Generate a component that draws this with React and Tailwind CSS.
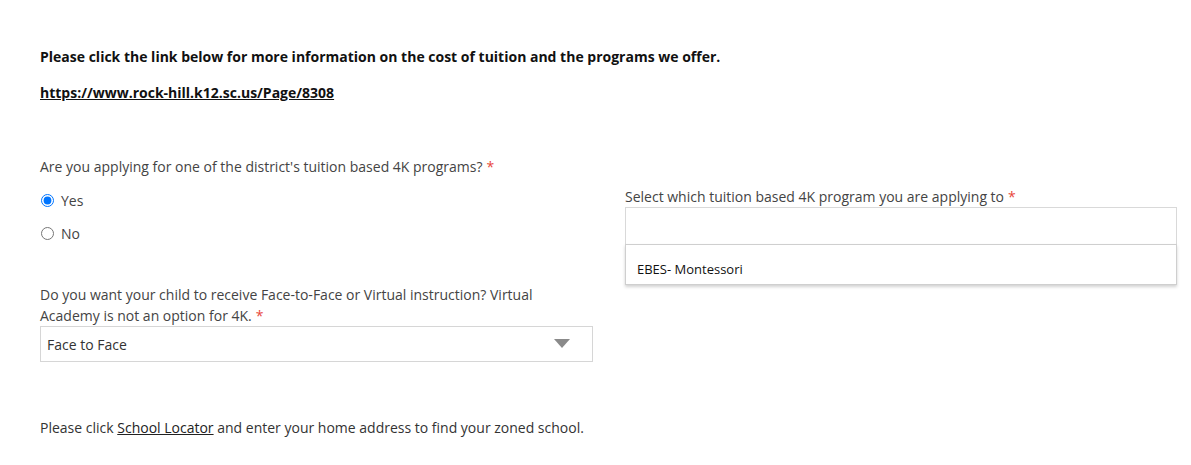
import React, { useState } from 'react';

const Req = () => <span className="ml-1 text-[#e8473b]">*</span>;

const RadioRow = ({ label, checked, onChange }) => (
  <label className="flex items-center h-5 text-[14px] text-[#444] cursor-pointer">
    <input
      type="radio"
      name="tuition"
      checked={checked}
      onChange={onChange}
      className="w-[13px] h-[13px] m-0 ml-[1px] accent-[#0075ff]"
    />
    <span className="ml-[7px]">{label}</span>
  </label>
);

export default function App() {
  const [tuition, setTuition] = useState('Yes');

  return (
    <div className="bg-white min-h-[465px] pl-10 pr-[14px] pt-[47px]" style={{ fontFamily: '"Open Sans", "Liberation Sans", sans-serif' }}>
      <p className="text-[14px] leading-5 font-bold text-[#111]">
        Please click the link below for more information on the cost of tuition and the programs we offer.
      </p>
      <p className="mt-4 text-[14px] leading-5 font-bold">
        <a href="#" className="underline text-[#111]">https://www.rock-hill.k12.sc.us/Page/8308</a>
      </p>

      <div className="mt-[54px] flex gap-8">
        {/* left column */}
        <div className="w-[553px]">
          <div className="text-[14px] leading-5 text-[#444]">
            Are you applying for one of the district's tuition based 4K programs?<Req />
          </div>
          <div className="mt-[13px] flex flex-col gap-[13px]">
            <RadioRow label="Yes" checked={tuition === 'Yes'} onChange={() => setTuition('Yes')} />
            <RadioRow label="No" checked={tuition === 'No'} onChange={() => setTuition('No')} />
          </div>

          <div className="mt-[41px] text-[14px] leading-[21px] text-[#444] pr-10">
            Do you want your child to receive Face-to-Face or Virtual instruction? Virtual Academy is not an option for 4K.<Req />
          </div>
          <div className="h-9 border border-[#d6d6d6] flex items-center justify-between pl-[6px] pr-[22px]">
            <span className="text-[14px] text-[#333]">Face to Face</span>
            <svg width="16" height="10" viewBox="0 0 16 10">
              <path d="M0 0 L16 0 L8 9 Z" fill="#8a8a8a" />
            </svg>
          </div>
        </div>

        {/* right column */}
        <div className="w-[552px] pt-[30px]">
          <div className="text-[14px] leading-5 text-[#444]">
            Select which tuition based 4K program you are applying to<Req />
          </div>
          <div className="h-[37px] border border-[#d9d9d9] border-b-0"></div>
          <div className="h-[41px] border border-[#cfcfcf] shadow-[0_2px_3px_rgba(0,0,0,0.18)] flex items-center pl-[11px] pt-[10px]">
            <span className="text-[13px] text-[#111]">EBES- Montessori</span>
          </div>
        </div>
      </div>

      <p className="mt-[56px] text-[14px] leading-5 text-[#333]">
        Please click <a href="#" className="underline text-[#222]">School Locator</a> and enter your home address to find your zoned school.
      </p>
    </div>
  );
}
